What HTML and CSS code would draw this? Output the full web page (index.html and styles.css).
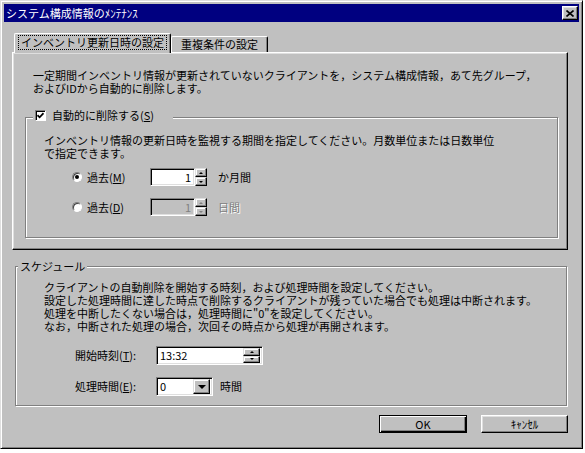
FILE: index.html
```html
<!DOCTYPE html>
<html lang="ja">

<head>
    <meta charset="UTF-8">
    <title>システム構成情報のメンテナンス</title>
    <link rel="stylesheet" href="styles.css">
</head>

<body>
    <div class="window">
        <div class="title-bar">
            <span class="title-text">システム構成情報のﾒﾝﾃﾅﾝｽ</span>
            <button class="close-button">
                <svg width="8" height="7" viewBox="0 0 8 7"><path d="M0.5 0.5L7.5 6.5M7.5 0.5L0.5 6.5" stroke="#000" stroke-width="1.6" fill="none"/></svg>
            </button>
        </div>

        <div class="dialog-body">
            <div class="tabs">
                <div class="tab active"><span class="focus">インベントリ更新日時の設定</span></div>
                <div class="tab">重複条件の設定</div>
            </div>

            <div class="tab-panel">
                <p class="desc">一定期間インベントリ情報が更新されていないクライアントを，システム構成情報，あて先グループ，<br>およびIDから自動的に削除します。</p>

                <div class="group">
                    <div class="group-title check-title">
                        <span class="checkbox">
                            <svg width="7" height="7" viewBox="0 0 7 7"><path d="M0.5 3.2L2.6 5.3L6.5 1.2" stroke="#000" stroke-width="1.7" fill="none"/></svg>
                        </span>
                        <span>自動的に削除する(<u>S</u>)</span>
                    </div>
                    <p class="group-text">インベントリ情報の更新日時を監視する期間を指定してください。月数単位または日数単位<br>で指定できます。</p>

                    <div class="option-row first">
                        <span class="radio checked"></span>
                        <span class="option-label">過去(<u>M</u>)</span>
                        <div class="spin-edit">
                            <span class="edit number">1</span>
                            <span class="spin">
                                <span class="spin-btn up"></span>
                                <span class="spin-btn down"></span>
                            </span>
                        </div>
                        <span class="unit">か月間</span>
                    </div>

                    <div class="option-row">
                        <span class="radio"></span>
                        <span class="option-label">過去(<u>D</u>)</span>
                        <div class="spin-edit disabled">
                            <span class="edit number">1</span>
                            <span class="spin">
                                <span class="spin-btn up"></span>
                                <span class="spin-btn down"></span>
                            </span>
                        </div>
                        <span class="unit disabled">日間</span>
                    </div>
                </div>
            </div>

            <div class="group schedule">
                <div class="group-title">スケジュール</div>
                <p class="schedule-text">クライアントの自動削除を開始する時刻，および処理時間を設定してください。<br>設定した処理時間に達した時点で削除するクライアントが残っていた場合でも処理は中断されます。<br>処理を中断したくない場合は，処理時間に"0"を設定してください。<br>なお，中断された処理の場合，次回その時点から処理が再開されます。</p>

                <div class="field-row first">
                    <span class="field-label">開始時刻(<u>T</u>):</span>
                    <div class="edit time-edit">
                        <span>13:32</span>
                        <span class="spin small">
                            <span class="spin-btn up"></span>
                            <span class="spin-btn down"></span>
                        </span>
                    </div>
                </div>

                <div class="field-row">
                    <span class="field-label">処理時間(<u>E</u>):</span>
                    <div class="edit combo">
                        <span>0</span>
                        <span class="combo-button"></span>
                    </div>
                    <span class="unit">時間</span>
                </div>
            </div>

            <div class="buttons">
                <button class="button default">OK</button>
                <button class="button">ｷｬﾝｾﾙ</button>
            </div>
        </div>
    </div>
</body>

</html>
```

FILE: styles.css
```css
body {
    margin: 0;
    background: #ffffff;
    font-family: "Noto Sans CJK JP", "Noto Sans", sans-serif;
    font-size: 11px;
    line-height: 13px;
    color: #000;
}

p {
    margin: 0;
}

.window {
    width: 583px;
    height: 449px;
    box-sizing: border-box;
    background: #c0c0c0;
    border: 1px solid;
    border-color: #dfdfdf #000 #000 #dfdfdf;
    box-shadow: inset 1px 1px #fff, inset -1px -1px #808080;
    padding: 3px;
}

/* タイトルバー */
.title-bar {
    display: flex;
    align-items: center;
    justify-content: space-between;
    height: 18px;
    padding: 0 1px 0 2px;
    background: #000080;
    color: #fff;
}

.close-button {
    display: flex;
    align-items: center;
    justify-content: center;
    width: 16px;
    height: 14px;
    padding: 0;
    background: #c0c0c0;
    border: 1px solid;
    border-color: #fff #000 #000 #fff;
    box-shadow: inset -1px -1px #808080, inset 1px 1px #dfdfdf;
}

.dialog-body {
    padding: 11px 11px 0 8px;
}

/* タブ */
.tabs {
    display: flex;
    align-items: flex-end;
    padding-left: 2px;
}

.tab {
    box-sizing: border-box;
    display: flex;
    align-items: center;
    justify-content: center;
    width: 97px;
    height: 16px;
    background: #c0c0c0;
    border: 1px solid;
    border-bottom: none;
    border-color: #fff #000 #000 #fff;
    border-radius: 2px 2px 0 0;
    box-shadow: inset -1px 0 #808080;
}

.tab.active {
    position: relative;
    z-index: 1;
    width: 157px;
    height: 20px;
    margin-bottom: -1px;
    align-items: flex-start;
    padding-top: 2px;
}

.focus {
    padding: 0 2px;
    outline: 1px dotted #000;
}

.tab-panel {
    border: 1px solid;
    border-color: #fff #000 #000 #fff;
    box-shadow: inset -1px -1px #808080, inset 1px 1px #dfdfdf;
    padding: 16px 9px 11px 12px;
}

.desc {
    margin-left: 8px;
}

/* グループボックス */
.group {
    display: flex;
    flex-direction: column;
    margin-top: 22px;
    border: 1px solid #808080;
    box-shadow: inset 1px 1px #fff, 1px 1px #fff;
    padding-bottom: 21px;
}

.group-title {
    display: flex;
    align-items: center;
    align-self: flex-start;
    height: 13px;
    margin: -7px 0 0 2px;
    padding: 0 2px;
    background: #c0c0c0;
}

.check-title {
    gap: 6px;
    margin: -9px 0 0 7px;
    padding-right: 19px;
}

.checkbox {
    box-sizing: border-box;
    display: flex;
    align-items: center;
    justify-content: center;
    width: 11px;
    height: 11px;
    background: #fff;
    border: 1px solid;
    border-color: #808080 #fff #fff #808080;
    box-shadow: inset 1px 1px #000;
}

.group-text {
    margin: 12px 0 0 18px;
}

.option-row {
    display: flex;
    align-items: center;
    height: 18px;
    margin: 12px 0 0 46px;
}

.option-row.first {
    margin-top: 8px;
}

.radio {
    box-sizing: border-box;
    display: flex;
    align-items: center;
    justify-content: center;
    width: 10px;
    height: 10px;
    border-radius: 50%;
    background: #fff;
    border: 1px solid;
    border-color: #808080 #fff #fff #808080;
    box-shadow: inset 1px 1px #404040;
}

.radio.checked::after {
    content: '';
    width: 4px;
    height: 4px;
    border-radius: 50%;
    background: #000;
}

.option-label {
    width: 63px;
    margin-left: 5px;
}

.spin-edit {
    display: flex;
    height: 18px;
}

.edit {
    box-sizing: border-box;
    background: #fff;
    border: 1px solid;
    border-color: #808080 #fff #fff #808080;
    box-shadow: inset 1px 1px #000, inset -1px -1px #dfdfdf;
}

.edit.number {
    width: 45px;
    padding-right: 3px;
    text-align: right;
    line-height: 16px;
}

.spin {
    display: flex;
    flex-direction: column;
    width: 12px;
}

.spin-btn {
    flex: 1;
    display: flex;
    align-items: center;
    justify-content: center;
    background: #c0c0c0;
    border: 1px solid;
    border-color: #dfdfdf #000 #000 #dfdfdf;
    box-shadow: inset -1px -1px #808080, inset 1px 1px #fff;
}

.spin-btn.up::after {
    content: '';
    border-left: 2px solid transparent;
    border-right: 2px solid transparent;
    border-bottom: 2px solid #000;
}

.spin-btn.down::after {
    content: '';
    border-left: 2px solid transparent;
    border-right: 2px solid transparent;
    border-top: 2px solid #000;
}

.unit {
    margin-left: 11px;
}

.disabled {
    color: #808080;
}

.disabled .edit {
    background: #c0c0c0;
}

.unit.disabled {
    text-shadow: 1px 1px #fff;
}

.disabled .spin-btn.up::after {
    border-bottom-color: #808080;
}

.disabled .spin-btn.down::after {
    border-top-color: #808080;
}

/* スケジュール */
.schedule {
    margin: 16px 1px 0 3px;
    padding-bottom: 9px;
}

.schedule-text {
    margin: 8px 0 0 28px;
}

.field-row {
    display: flex;
    align-items: center;
    height: 19px;
    margin: 12px 0 0 59px;
}

.field-row.first {
    margin-top: 13px;
}

.field-label {
    width: 81px;
}

.time-edit,
.combo {
    display: flex;
    align-items: center;
    height: 19px;
    padding: 2px 2px 2px 3px;
}

.time-edit {
    width: 107px;
    justify-content: space-between;
}

.spin.small {
    width: 17px;
    height: 15px;
}

.combo {
    width: 57px;
    justify-content: space-between;
}

.combo-button {
    display: flex;
    align-items: center;
    justify-content: center;
    box-sizing: border-box;
    width: 17px;
    height: 15px;
    background: #c0c0c0;
    border: 1px solid;
    border-color: #dfdfdf #000 #000 #dfdfdf;
    box-shadow: inset -1px -1px #808080, inset 1px 1px #fff;
}

.combo-button::after {
    content: '';
    border-left: 4px solid transparent;
    border-right: 4px solid transparent;
    border-top: 4px solid #000;
}

.field-row .unit {
    margin-left: 7px;
}

/* ボタン */
.buttons {
    display: flex;
    justify-content: flex-end;
    gap: 14px;
    margin-top: 9px;
}

.button {
    width: 87px;
    height: 18px;
    padding: 0;
    font-family: inherit;
    font-size: 11px;
    line-height: 13px;
    color: #000;
    background: #c0c0c0;
    border: 1px solid;
    border-color: #fff #000 #000 #fff;
    box-shadow: inset -1px -1px #808080, inset 1px 1px #dfdfdf;
}

.button.default {
    width: 88px;
    border-color: #000;
    box-shadow: inset 1px 1px #fff, inset -1px -1px #000, inset -2px -2px #808080;
}
```
